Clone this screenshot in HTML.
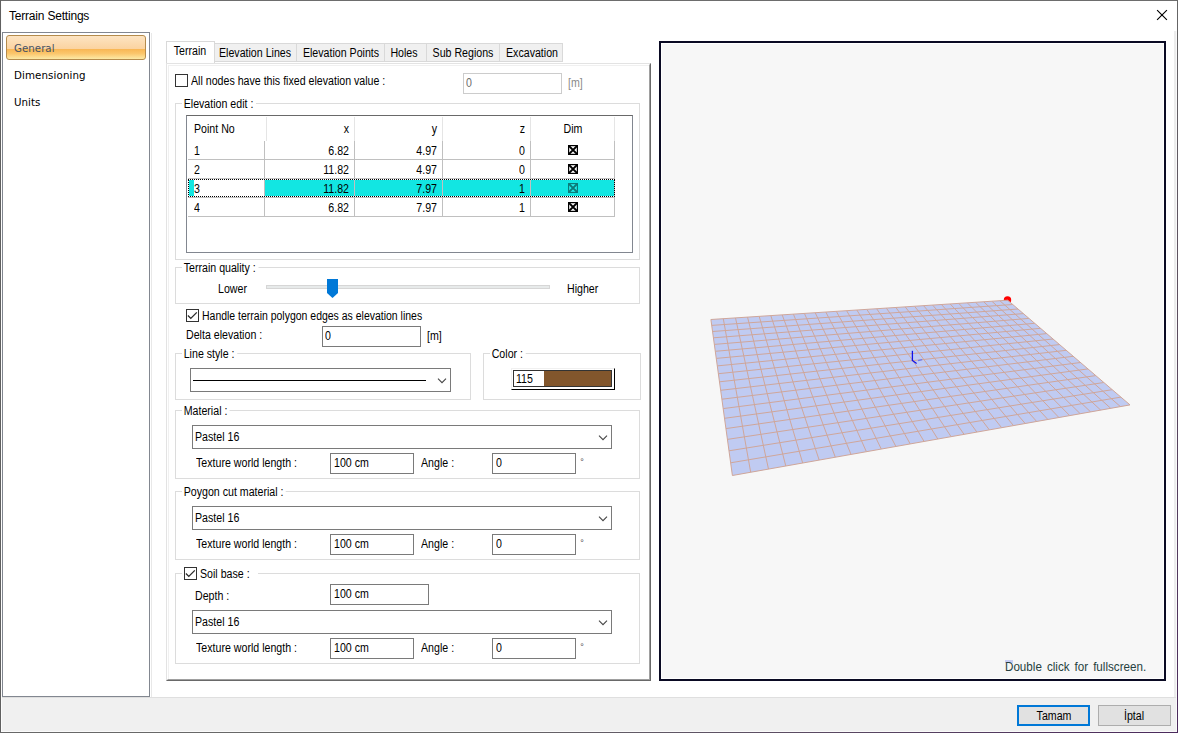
<!DOCTYPE html>
<html><head><meta charset="utf-8"><title>Terrain Settings</title>
<style>
*{box-sizing:border-box;margin:0;padding:0}
html,body{width:1178px;height:733px;overflow:hidden;background:#fff}
body{position:relative;font-family:"Liberation Sans",sans-serif;font-size:12.5px;color:#000}
.a{position:absolute}
.t{position:absolute;white-space:nowrap;line-height:14px;height:14px;font-size:12.5px;transform:scaleX(.85);transform-origin:0 50%}
.t.r{text-align:right;transform-origin:100% 50%}
.t.c{text-align:center;transform-origin:50% 50%}
.t.g{background:#fff;padding:0 3px 0 2px;margin-left:-2px}
.n{position:absolute;white-space:nowrap;font-family:"DejaVu Sans","Liberation Sans",sans-serif;font-size:11px;line-height:13px;transform:scaleX(.935);transform-origin:0 50%}
.grp{position:absolute;border:1px solid #dcdcdc}
.inp{position:absolute;border:1px solid #7a7a7a;background:#fff;height:21px}
.cmb{position:absolute;border:1px solid #7a7a7a;background:#fff;height:24px}
.chk{position:absolute;width:13px;height:13px;border:1px solid #333;background:#fff}
.tab{position:absolute;top:43px;height:19px;border:1px solid #d9d9d9;border-left:none;background:#f0f0f0}
</style></head><body>
<!-- window frame -->
<div class="a" style="left:1174px;top:31px;width:3px;height:701px;background:#ececec"></div>
<div class="a" style="left:1px;top:697px;width:1176px;height:35px;background:#f0f0f0;border-top:1px solid #dfdfdf"></div>
<div class="a" style="left:1px;top:731px;width:1176px;height:1px;background:#fafafa"></div>
<div class="a" style="left:1px;top:1px;width:1px;height:731px;background:#fcfcfc"></div>
<div class="a" style="left:1176px;top:31px;width:1px;height:701px;background:#fafafa"></div>
<div class="a" style="left:0;top:0;width:1178px;height:1px;background:#6d6d6d"></div>
<div class="a" style="left:0;top:0;width:1px;height:733px;background:#606060"></div>
<div class="a" style="left:1177px;top:0;width:1px;height:733px;background:linear-gradient(#666 0%,#5a4a5e 50%,#4b2a5c 100%)"></div>
<div class="a" style="left:0;top:732px;width:1178px;height:1px;background:linear-gradient(90deg,#686868 0%,#686868 40%,#4b2a5c 100%)"></div>

<!-- title -->
<div class="a" id="title" style="left:9px;top:8px;font-size:12px;line-height:16px;height:16px;white-space:nowrap;letter-spacing:-.2px">Terrain Settings</div>
<svg class="a" style="left:1155px;top:8px" width="14" height="14" viewBox="0 0 14 14"><path d="M2.1 2.1L11.9 11.9M11.9 2.1L2.1 11.9" stroke="#000" stroke-width="1.15" fill="none"/></svg>

<!-- left panel -->
<div class="a" style="left:2px;top:32px;width:148px;height:665px;border:1px solid #828790;background:#fff"></div>
<div class="a" style="left:151px;top:33px;width:1px;height:664px;background:#e8e8e8"></div>
<div class="a" id="genbtn" style="left:6px;top:35px;width:140px;height:25px;border:1px solid #b58b4c;border-radius:3px;background:linear-gradient(#fde4c2 0%,#fbd3a0 56%,#f9b755 58%,#fbc66c 76%,#fdeaa6 100%)"></div>
<div class="n" id="nav1" style="left:14px;top:42px;color:#465264">General</div>
<div class="n" id="nav2" style="left:14px;top:69px;letter-spacing:.1px">Dimensioning</div>
<div class="n" id="nav3" style="left:14px;top:96px">Units</div>

<!-- tab page -->
<div class="a" id="page" style="left:166px;top:63px;width:485px;height:618px;background:#fff;border-left:1px solid #e3e3e3;border-top:1px solid #e3e3e3;border-right:1px solid #696969;border-bottom:1px solid #696969"></div>
<div class="a" style="left:167px;top:64px;width:483px;height:616px;border-left:1px solid #fff;border-top:1px solid #fff;border-right:1px solid #a0a0a0;border-bottom:1px solid #a0a0a0"></div>
<div class="a" style="left:168px;top:65px;width:481px;height:614px;border-left:1px solid #f0f0f0;border-top:1px solid #f0f0f0"></div>

<!-- tabs -->
<div class="tab" id="tab2" style="left:215px;width:82px"></div>
<div class="tab" id="tab3" style="left:297px;width:88px"></div>
<div class="tab" id="tab4" style="left:385px;width:42px"></div>
<div class="tab" id="tab5" style="left:427px;width:73px"></div>
<div class="tab" id="tab6" style="left:500px;width:63px"></div>
<div class="a" id="tab1" style="left:166px;top:41px;width:49px;height:22px;border:1px solid #d9d9d9;border-bottom:none;background:#fff"></div>

<!-- row 1 -->
<div class="chk" style="left:175px;top:74px"></div>
<div class="inp" style="left:463px;top:73px;width:99px;border-color:#ccc"></div>

<!-- Elevation edit group -->
<div class="grp" style="left:175px;top:103px;width:465px;height:157px"></div>
<div class="a" id="list" style="left:186px;top:115px;width:447px;height:138px;border:1px solid #828790;border-top-color:#696969;background:#fff"></div>
<div class="a" style="left:266px;top:117px;width:1px;height:24px;background:#e5e5e5"></div>
<div class="a" style="left:354px;top:117px;width:1px;height:24px;background:#e5e5e5"></div>
<div class="a" style="left:442px;top:117px;width:1px;height:24px;background:#e5e5e5"></div>
<div class="a" style="left:530px;top:117px;width:1px;height:24px;background:#e5e5e5"></div>
<div class="a" style="left:614px;top:117px;width:1px;height:24px;background:#e5e5e5"></div>
<div class="t" style="left:194.1px;top:122px;">Point No</div>
<div class="t r" style="left:149px;width:200px;top:122px;">x</div>
<div class="t r" style="left:237px;width:200px;top:122px;">y</div>
<div class="t r" style="left:325px;width:200px;top:122px;">z</div>
<div class="t c" style="left:472.5px;width:200px;top:122px;">Dim</div>
<div class="a" style="left:188px;top:159px;width:427px;height:1px;background:#c0c0c0"></div>
<div class="t" style="left:193.6px;top:144px;">1</div>
<div class="t r" style="left:149px;width:200px;top:144px;">6.82</div>
<div class="t r" style="left:237px;width:200px;top:144px;">4.97</div>
<div class="t r" style="left:325px;width:200px;top:144px;">0</div>
<svg class="a" style="left:568px;top:145px" width="10" height="10" viewBox="0 0 10 10"><rect x=".6" y=".6" width="8.8" height="8.8" fill="#fff" stroke="#000" stroke-width="1.2"/><path d="M1 1L9 9M9 1L1 9" stroke="#000" stroke-width="1.8" fill="none"/></svg>
<div class="a" style="left:188px;top:178px;width:427px;height:1px;background:#c0c0c0"></div>
<div class="t" style="left:193.6px;top:163px;">2</div>
<div class="t r" style="left:149px;width:200px;top:163px;">11.82</div>
<div class="t r" style="left:237px;width:200px;top:163px;">4.97</div>
<div class="t r" style="left:325px;width:200px;top:163px;">0</div>
<svg class="a" style="left:568px;top:164px" width="10" height="10" viewBox="0 0 10 10"><rect x=".6" y=".6" width="8.8" height="8.8" fill="#fff" stroke="#000" stroke-width="1.2"/><path d="M1 1L9 9M9 1L1 9" stroke="#000" stroke-width="1.8" fill="none"/></svg>
<div class="a" style="left:189px;top:180px;width:425px;height:16px;background:#12e6e2"></div>
<div class="a" style="left:194px;top:180px;width:70px;height:16px;background:#fff"></div>
<div class="a" style="left:188px;top:197px;width:427px;height:1px;background:#c0c0c0"></div>
<div class="t" style="left:193.6px;top:182px;">3</div>
<div class="t r" style="left:149px;width:200px;top:182px;">11.82</div>
<div class="t r" style="left:237px;width:200px;top:182px;">7.97</div>
<div class="t r" style="left:325px;width:200px;top:182px;">1</div>
<svg class="a" style="left:568px;top:183px" width="10" height="10" viewBox="0 0 10 10"><rect x=".6" y=".6" width="8.8" height="8.8" fill="#22f0ee" stroke="#0b7b79" stroke-width="1.2"/><path d="M1 1L9 9M9 1L1 9" stroke="#0b7b79" stroke-width="1.8" fill="none"/></svg>
<div class="a" style="left:188px;top:216px;width:427px;height:1px;background:#c0c0c0"></div>
<div class="t" style="left:193.6px;top:201px;">4</div>
<div class="t r" style="left:149px;width:200px;top:201px;">6.82</div>
<div class="t r" style="left:237px;width:200px;top:201px;">7.97</div>
<div class="t r" style="left:325px;width:200px;top:201px;">1</div>
<svg class="a" style="left:568px;top:202px" width="10" height="10" viewBox="0 0 10 10"><rect x=".6" y=".6" width="8.8" height="8.8" fill="#fff" stroke="#000" stroke-width="1.2"/><path d="M1 1L9 9M9 1L1 9" stroke="#000" stroke-width="1.8" fill="none"/></svg>
<div class="a" style="left:264px;top:141px;width:1px;height:76px;background:#c0c0c0"></div>
<div class="a" style="left:354px;top:141px;width:1px;height:76px;background:#c0c0c0"></div>
<div class="a" style="left:442px;top:141px;width:1px;height:76px;background:#c0c0c0"></div>
<div class="a" style="left:530px;top:141px;width:1px;height:76px;background:#c0c0c0"></div>
<div class="a" style="left:614px;top:141px;width:1px;height:76px;background:#c0c0c0"></div>
<div class="a" style="left:188px;top:179px;width:427px;height:18px;border:1px dotted #000"></div>

<!-- Terrain quality -->
<div class="grp" style="left:175px;top:267px;width:465px;height:37px"></div>
<div class="a" style="left:266px;top:285px;width:284px;height:4px;background:#e7eaea;border:1px solid #d6d6d6"></div>
<svg class="a" style="left:327px;top:279px" width="11" height="19" viewBox="0 0 11 19"><path d="M0 0H11V14L5.5 19L0 14Z" fill="#0078d7"/></svg>

<!-- handle checkbox -->
<div class="chk" style="left:186px;top:309px"><svg width="11" height="11" viewBox="0 0 11 11" style="display:block"><path d="M.9 5.5L3.8 8.4L9.8 2.4" stroke="#2a2a2a" stroke-width="1.3" fill="none"/></svg></div>
<div class="inp" style="left:322px;top:326px;width:99px"></div>

<!-- Line style -->
<div class="grp" style="left:175px;top:353px;width:296px;height:47px"></div>
<div class="cmb" style="left:190px;top:368px;width:261px;height:24px"></div>
<div class="a" style="left:193px;top:380px;width:233px;height:1px;background:#000"></div>
<svg class="a chev" style="left:437px;top:378px" width="10" height="6" viewBox="0 0 10 6"><path d="M1 .6L5 4.7L9 .6" stroke="#444" stroke-width="1.05" fill="none"/></svg>

<!-- Color -->
<div class="grp" style="left:483px;top:353px;width:158px;height:47px"></div>
<div class="a" style="left:511px;top:368px;width:104px;height:22px;background:#fff;border-top:1px solid #f0f0f0;border-left:1px solid #f0f0f0;border-right:1px solid #000;border-bottom:1px solid #000"></div>
<div class="a" style="left:513px;top:370px;width:99px;height:17px;border:1px solid #333;background:#82562c"></div>
<div class="a" style="left:514px;top:371px;width:30px;height:15px;background:#fff"></div>

<!-- Material -->
<div class="grp" style="left:175px;top:410px;width:465px;height:69px"></div>
<div class="cmb" style="left:192px;top:425px;width:420px"></div>
<svg class="a chev" style="left:598px;top:435px" width="10" height="6" viewBox="0 0 10 6"><path d="M1 .6L5 4.7L9 .6" stroke="#444" stroke-width="1.05" fill="none"/></svg>
<div class="inp" style="left:330px;top:453px;width:84px"></div>
<div class="inp" style="left:492px;top:453px;width:84px"></div>

<!-- Poygon cut material -->
<div class="grp" style="left:175px;top:491px;width:465px;height:69px"></div>
<div class="cmb" style="left:192px;top:506px;width:420px"></div>
<svg class="a chev" style="left:598px;top:516px" width="10" height="6" viewBox="0 0 10 6"><path d="M1 .6L5 4.7L9 .6" stroke="#444" stroke-width="1.05" fill="none"/></svg>
<div class="inp" style="left:330px;top:534px;width:84px"></div>
<div class="inp" style="left:492px;top:534px;width:84px"></div>

<!-- Soil base -->
<div class="grp" style="left:175px;top:573px;width:465px;height:91px"></div>
<div class="a" style="left:182px;top:566px;width:76px;height:15px;background:#fff"></div>
<div class="chk" style="left:184px;top:567px"><svg width="11" height="11" viewBox="0 0 11 11" style="display:block"><path d="M.9 5.5L3.8 8.4L9.8 2.4" stroke="#2a2a2a" stroke-width="1.3" fill="none"/></svg></div>
<div class="inp" style="left:330px;top:584px;width:99px"></div>
<div class="cmb" style="left:192px;top:610px;width:420px"></div>
<svg class="a chev" style="left:598px;top:620px" width="10" height="6" viewBox="0 0 10 6"><path d="M1 .6L5 4.7L9 .6" stroke="#444" stroke-width="1.05" fill="none"/></svg>
<div class="inp" style="left:330px;top:638px;width:84px"></div>
<div class="inp" style="left:492px;top:638px;width:84px"></div>

<!-- 3D view -->
<div class="a" id="view" style="left:659px;top:41px;width:507px;height:640px;border:2px solid #0a0a23;background:#f7f7f7;box-shadow:inset 0 0 0 1px #fff"></div>
<svg class="a" style="left:0;top:0" width="1178" height="733" viewBox="0 0 1178 733">
<defs><clipPath id="gc"><polygon points="710.9,319.5 1007.7,300.2 1130.0,404.9 732.4,475.5"/></clipPath></defs><circle cx="1007.5" cy="299.9" r="3.7" fill="#f00"/><polygon points="710.9,319.5 1007.7,300.2 1130.0,404.9 732.4,475.5" fill="#c0cbf2"/><path d="M711.7 325.4L1012.8 304.5M712.6 331.5L1018.0 309.0M713.4 337.8L1023.4 313.6M714.3 344.4L1028.9 318.4M715.3 351.3L1034.7 323.3M716.3 358.4L1040.6 328.3M717.3 365.9L1046.7 333.6M718.4 373.7L1053.0 339.0M719.5 381.8L1059.5 344.6M720.7 390.3L1066.3 350.3M721.9 399.2L1073.3 356.3M723.2 408.6L1080.5 362.5M724.5 418.3L1088.0 368.9M725.9 428.6L1095.8 375.6M727.4 439.4L1103.8 382.5M729.0 450.8L1112.2 389.7M730.7 462.8L1120.9 397.1M723.3 318.7L750.7 472.3M735.5 317.9L768.5 469.1M747.5 317.1L785.8 466.0M759.2 316.4L802.7 463.0M770.8 315.6L819.2 460.1M782.2 314.9L835.3 457.2M793.4 314.1L851.0 454.4M804.4 313.4L866.4 451.7M815.2 312.7L881.3 449.1M825.8 312.0L895.9 446.5M836.3 311.3L910.2 443.9M846.6 310.7L924.1 441.5M856.8 310.0L937.8 439.0M866.8 309.4L951.1 436.7M876.6 308.7L964.1 434.4M886.3 308.1L976.9 432.1M895.8 307.5L989.4 429.9M905.2 306.9L1001.6 427.7M914.5 306.3L1013.5 425.6M923.6 305.7L1025.2 423.5M932.6 305.1L1036.7 421.5M941.4 304.5L1047.9 419.5M950.1 303.9L1058.9 417.5M958.7 303.4L1069.7 415.6M967.2 302.8L1080.2 413.7M975.5 302.3L1090.6 411.9M983.7 301.8L1100.7 410.1M991.8 301.2L1110.7 408.3M999.8 300.7L1120.4 406.6" stroke="#cfa69a" stroke-width="1" fill="none" clip-path="url(#gc)"/><path d="M710.9 319.5L1007.7 300.2L1130.0 404.9L732.4 475.5Z" stroke="#cfa69a" stroke-width="1" fill="none"/><path d="M912.4 350.8V361" stroke="#1010e8" stroke-width="1.3" fill="none"/><path d="M912.4 360.6L916.6 363.6" stroke="#1010e8" stroke-width="1.2" fill="none"/><path d="M918 360.6L922.2 359.6" stroke="#6878f4" stroke-width="1.2" fill="none"/>
</svg>
<div class="a" style="left:1005px;top:660px;width:8px;height:3px;background:#c8cef3"></div>
<div class="a" id="dbl" style="left:1005.3px;top:658px;font-size:13px;line-height:17px;height:17px;white-space:nowrap;color:#263f3f;word-spacing:2px;transform:scaleX(.895);transform-origin:0 50%">Double click for fullscreen.</div>

<!-- buttons -->
<div class="a" style="left:1017px;top:705px;width:73px;height:21px;border:2px solid #0078d7;background:#e1e1e1"></div>
<div class="a" style="left:1098px;top:705px;width:73px;height:21px;border:1px solid #adadad;background:#e1e1e1"></div>
<div class="t" id="l_all" style="left:191px;top:74px;">All nodes have this fixed elevation value :</div>
<div class="t" style="left:466.3px;top:76px;color:#6d6d6d">0</div>
<div class="t" style="left:568px;top:76px;color:#8a8a8a">[m]</div>
<div class="t" id="l_lower" style="left:218px;top:282px;">Lower</div>
<div class="t" id="l_higher" style="left:566.5px;top:282px;">Higher</div>
<div class="t" id="l_handle" style="left:202px;top:309px;transform:scaleX(.838)">Handle terrain polygon edges as elevation lines</div>
<div class="t" id="l_delta" style="left:186px;top:328px;">Delta elevation :</div>
<div class="t" style="left:325.2px;top:329px;">0</div>
<div class="t" style="left:427px;top:329px;">[m]</div>
<div class="t" style="left:516px;top:372px;">115</div>
<div class="t" style="left:194.7px;top:430px;">Pastel 16</div>
<div class="t" style="left:195.6px;top:456px;">Texture world length :</div>
<div class="t" style="left:333.5px;top:456px;">100 cm</div>
<div class="t" style="left:421px;top:456px;">Angle :</div>
<div class="t" style="left:496px;top:456px;">0</div>
<div class="a" style="left:580.2px;top:456px;font-size:9px;line-height:12px;color:#444">°</div>
<div class="t" style="left:194.7px;top:511px;">Pastel 16</div>
<div class="t" style="left:195.6px;top:537px;">Texture world length :</div>
<div class="t" style="left:333.5px;top:537px;">100 cm</div>
<div class="t" style="left:421px;top:537px;">Angle :</div>
<div class="t" style="left:496px;top:537px;">0</div>
<div class="a" style="left:580.2px;top:537px;font-size:9px;line-height:12px;color:#444">°</div>
<div class="t" style="left:194.7px;top:615px;">Pastel 16</div>
<div class="t" style="left:196.3px;top:641px;">Texture world length :</div>
<div class="t" style="left:333.5px;top:641px;">100 cm</div>
<div class="t" style="left:421px;top:641px;">Angle :</div>
<div class="t" style="left:496px;top:641px;">0</div>
<div class="a" style="left:580.2px;top:641px;font-size:9px;line-height:12px;color:#444">°</div>
<div class="t" id="l_soil" style="left:200px;top:567px;">Soil base :</div>
<div class="t" style="left:194.8px;top:589px;">Depth :</div>
<div class="t" style="left:333.5px;top:587px;">100 cm</div>
<div class="t g" id="g_elev" style="left:184px;top:97px;">Elevation edit :</div>
<div class="t g" id="g_tq" style="left:184px;top:261px;">Terrain quality :</div>
<div class="t g" id="g_ls" style="left:184px;top:347px;">Line style :</div>
<div class="t g" id="g_col" style="left:491.5px;top:347px;">Color :</div>
<div class="t g" id="g_mat" style="left:184px;top:404px;">Material :</div>
<div class="t g" id="g_pcm" style="left:184px;top:485px;">Poygon cut material :</div>
<div class="t c" id="tt1" style="left:89.80000000000001px;width:200px;top:44px;">Terrain</div>
<div class="t c" style="left:154.7px;width:200px;top:46px;">Elevation Lines</div>
<div class="t c" style="left:240.5px;width:200px;top:46px;">Elevation Points</div>
<div class="t c" style="left:304.4px;width:200px;top:46px;">Holes</div>
<div class="t c" style="left:363px;width:200px;top:46px;">Sub Regions</div>
<div class="t c" style="left:432.20000000000005px;width:200px;top:46px;">Excavation</div>
<div class="t c" style="left:953.5px;width:200px;top:709px;">Tamam</div>
<div class="t c" style="left:1033.8px;width:200px;top:709px;">İptal</div>
</body></html>
